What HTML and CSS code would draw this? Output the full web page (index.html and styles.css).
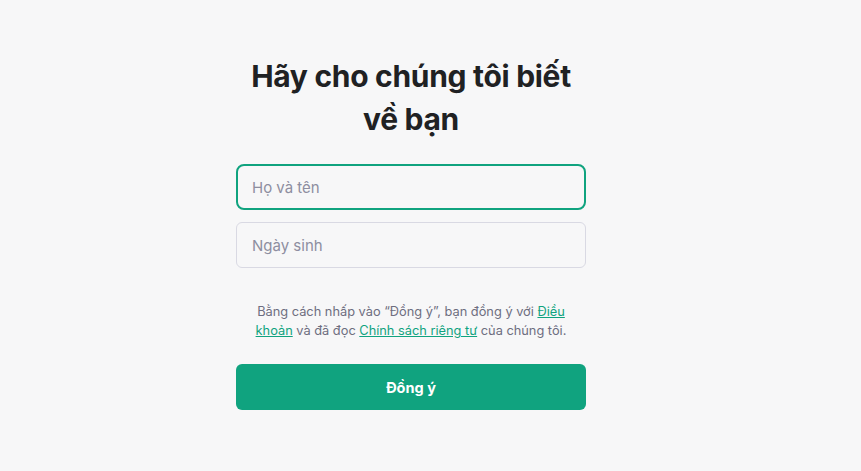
FILE: index.html
```html
<!DOCTYPE html>
<html lang="vi">

<head>
  <meta charset="UTF-8" />
  <meta name="viewport" content="width=device-width, initial-scale=1.0" />
  <title>Hãy cho chúng tôi biết về bạn</title>
  <link rel="stylesheet" href="styles.css">
</head>

<body>
  <main class="about-page">
    <!-- Heading -->
    <h1 class="about-title">Hãy cho chúng tôi biết về bạn</h1>

    <!-- Form -->
    <form class="about-form">
      <input class="field field-focus" type="text" placeholder="Họ và tên" />
      <input class="field" type="text" placeholder="Ngày sinh" />

      <p class="terms">
        Bằng cách nhấp vào “Đồng ý”, bạn đồng ý với <a href="#">Điều khoản</a> và đã đọc
        <a href="#">Chính sách riêng tư</a> của chúng tôi.
      </p>

      <button type="button" class="submit-button">Đồng ý</button>
    </form>
  </main>
</body>

</html>
```

FILE: styles.css
```css
*,
*::after,
*::before {
  margin: 0;
  padding: 0;
  box-sizing: border-box;
}

html {
  font-family: 'Inter', 'Noto Sans', sans-serif;
}

body {
  background-color: #f7f7f8;
  color: #202123;
  min-height: 100vh;
  padding-right: 39px;
}

.about-page {
  width: 350px;
  margin: 0 auto;
  padding-top: 55px;
  display: flex;
  flex-direction: column;
  align-items: center;
}

.about-title {
  width: 330px;
  font-size: 30px;
  line-height: 43px;
  font-weight: 700;
  text-align: center;
  letter-spacing: -0.3px;
  color: #202123;
}

.about-form {
  width: 100%;
  margin-top: 23px;
  display: flex;
  flex-direction: column;
}

.field {
  height: 46px;
  width: 100%;
  padding: 0 15px;
  font-family: inherit;
  font-size: 15px;
  color: #202123;
  background-color: transparent;
  border: 1px solid #d9d9e3;
  border-radius: 6px;
  outline: none;
}

.field + .field {
  margin-top: 12px;
}

.field::placeholder {
  color: #8e8ea0;
}

.field-focus {
  border: 2px solid #10a37f;
  border-radius: 8px;
  padding: 0 14px;
}

.terms {
  margin: 34px 8px 0;
  font-size: 12.8px;
  line-height: 19px;
  text-align: center;
  color: #6e6e80;
}

.terms a {
  color: #10a37f;
  text-decoration: underline;
}

.submit-button {
  margin-top: 24px;
  height: 46px;
  width: 100%;
  border: none;
  border-radius: 6px;
  background-color: #10a37f;
  color: #fff;
  font-family: inherit;
  font-size: 14.5px;
  font-weight: 700;
  cursor: pointer;
}
```
